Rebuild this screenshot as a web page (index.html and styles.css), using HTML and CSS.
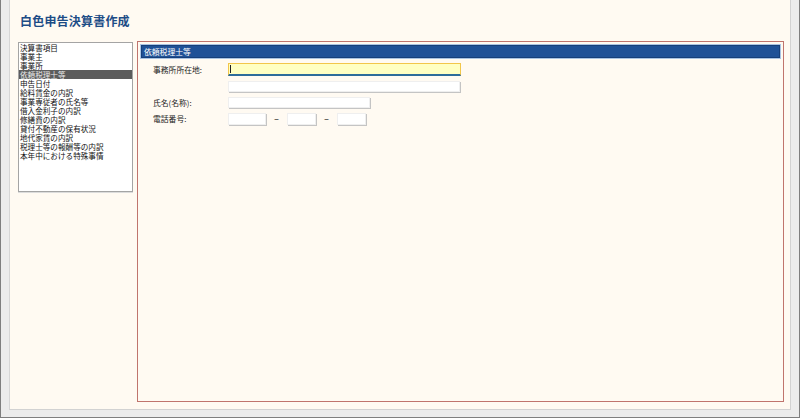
FILE: index.html
```html
<!DOCTYPE html>
<html lang="ja">
<head>
<meta charset="utf-8">
<title>白色申告決算書作成</title>
<link rel="stylesheet" href="styles.css">
</head>
<body>
<div class="window">
  <div class="sheet">
    <h1 class="title">白色申告決算書作成</h1>
    <div class="main">
      <ul class="menu">
        <li>決算書項目</li>
        <li>事業主</li>
        <li>事業所</li>
        <li class="selected">依頼税理士等</li>
        <li>申告日付</li>
        <li>給料賃金の内訳</li>
        <li>事業専従者の氏名等</li>
        <li>借入金利子の内訳</li>
        <li>修繕費の内訳</li>
        <li>貸付不動産の保有状況</li>
        <li>地代家賃の内訳</li>
        <li>税理士等の報酬等の内訳</li>
        <li>本年中における特殊事情</li>
      </ul>
      <section class="panel">
        <div class="panel-head">依頼税理士等</div>
        <div class="form">
          <label class="label">事務所所在地:</label>
          <div class="field field-active field-addr"><span class="caret"></span></div>
          <span class="label"></span>
          <div class="field field-addr2"></div>
          <label class="label">氏名(名称):</label>
          <div class="field field-name"></div>
          <label class="label">電話番号:</label>
          <div class="phone">
            <div class="field field-tel1"></div>
            <span class="dash">–</span>
            <div class="field field-tel2"></div>
            <span class="dash">–</span>
            <div class="field field-tel2"></div>
          </div>
        </div>
      </section>
    </div>
  </div>
</div>
</body>
</html>
```

FILE: styles.css
```css
html, body {
  margin: 0;
  padding: 0;
}

body {
  font-family: "Noto Sans CJK JP", "Liberation Sans", sans-serif;
  color: #111;
}

.window {
  box-sizing: border-box;
  width: 800px;
  height: 418px;
  background: #ececec;
  border: 1px solid #7f7f7f;
  border-top: none;
  padding: 0 8px 7px 8px;
}

.sheet {
  box-sizing: border-box;
  height: 410px;
  background: #fffaf2;
  border-left: 1px solid #d6d6d6;
  border-right: 1px solid #d2d2d2;
  border-bottom: 1px solid #d2d2d2;
  padding: 0 6px 0 8px;
  display: flex;
  flex-direction: column;
}

.title {
  margin: 0 0 0 2px;
  height: 41px;
  box-sizing: border-box;
  padding-top: 14px;
  font-size: 12px;
  line-height: 14px;
  font-weight: bold;
  color: #1d4c86;
  letter-spacing: 0.2px;
}

.main {
  display: flex;
  gap: 4px;
  height: 361px;
}

.menu {
  list-style: none;
  margin: 1px 0 0 0;
  padding: 0;
  box-sizing: border-box;
  width: 115px;
  height: 150px;
  background: #fff;
  border: 1px solid #a4a4a4;
  box-shadow: 0 1px 0 #dcdcdc;
}

.menu li {
  height: 9px;
  line-height: 9px;
  font-size: 7.6px;
  padding-left: 1px;
  white-space: nowrap;
  color: #111;
}

.menu li.selected {
  background: #5c5c5c;
  color: #e8e8e8;
}

.panel {
  box-sizing: border-box;
  width: 647px;
  height: 361px;
  border: 1px solid #c0746d;
  padding: 3px;
}

.panel-head {
  box-sizing: border-box;
  height: 13px;
  background: #1f5197;
  border: 1px solid #163f7a;
  outline: 1px solid #a9c3e3;
  color: #fff;
  font-size: 7.8px;
  line-height: 11px;
  padding-left: 2px;
}

.form {
  display: grid;
  grid-template-columns: 75px auto;
  grid-template-rows: 13px 11px 11px 12px;
  row-gap: 5px;
  margin-top: 5px;
  padding-left: 12px;
  align-items: center;
}

.label {
  font-size: 7.8px;
  line-height: 10px;
  color: #222;
  white-space: nowrap;
}

.field {
  box-sizing: border-box;
  height: 100%;
  background: #fff;
  border: 1px solid #efefef;
  box-shadow: 1px 1px 0 #c4c4c4;
}

.field-active {
  position: relative;
  background: #ffffc2;
  border: 1px solid #f2c64a;
  border-bottom: 2px solid #2d6c9a;
  box-shadow: none;
}

.caret {
  position: absolute;
  left: 1px;
  top: 1px;
  width: 1px;
  height: 8px;
  background: #222;
}

.field-addr {
  width: 233px;
}

.field-addr2 {
  width: 232px;
}

.field-name {
  width: 142px;
}

.phone {
  display: flex;
  align-items: center;
  height: 12px;
}

.field-tel1 {
  width: 38px;
}

.field-tel2 {
  width: 29px;
}

.dash {
  width: 21px;
  text-align: center;
  font-family: "Liberation Sans", sans-serif;
  font-weight: bold;
  font-size: 8px;
  line-height: 10px;
  color: #444;
}
```
